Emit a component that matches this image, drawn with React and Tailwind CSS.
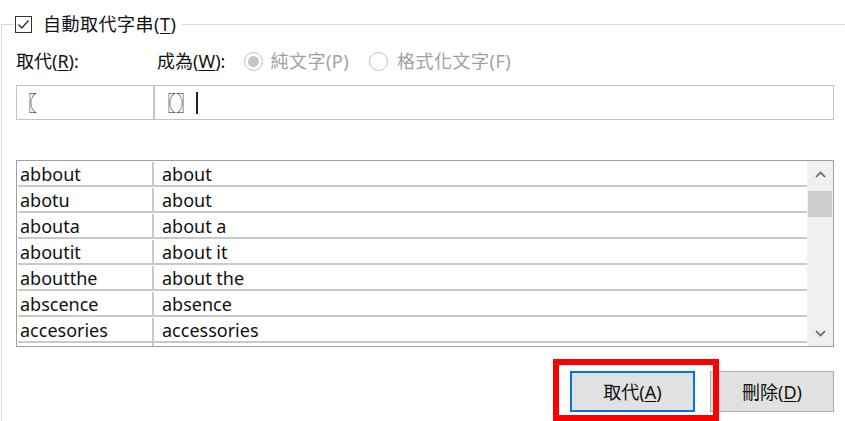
import React from 'react';

const rows = [
  ['abbout', 'about'],
  ['abotu', 'about'],
  ['abouta', 'about a'],
  ['aboutit', 'about it'],
  ['aboutthe', 'about the'],
  ['abscence', 'absence'],
  ['accesories', 'accessories'],
];

const Radio = ({ checked }) => (
  <span className="flex h-[19px] w-[19px] items-center justify-center rounded-full border border-[#c2c2c2] bg-white">
    {checked && <span className="h-[11px] w-[11px] rounded-full bg-[#c6c6c6]" />}
  </span>
);

const Chevron = ({ up }) => (
  <svg width="11" height="7" viewBox="0 0 11 7" className="text-[#606060]">
    <polyline
      points={up ? '1,6 5.5,1.5 10,6' : '1,1 5.5,5.5 10,1'}
      fill="none"
      stroke="currentColor"
      strokeWidth="1.6"
    />
  </svg>
);

export default function App() {
  return (
    <div className="h-[421px] w-[845px] overflow-hidden bg-white font-['Noto_Sans','Noto_Sans_CJK_TC',sans-serif] text-[18px] leading-[24px] text-[#111]">
      <fieldset className="ml-[1px] mt-[12px] h-[420px] border-l border-t border-[#d9d9d9]">
        <legend className="ml-[12px] flex items-center pl-[1px] pr-[6px]">
          {/* checkbox */}
          <span className="flex h-[17px] w-[17px] items-center justify-center border border-[#333] bg-white">
            <svg width="13" height="11" viewBox="0 0 13 11">
              <polyline points="1.5,5.5 4.8,9 11.5,1.5" fill="none" stroke="#333" strokeWidth="1.5" />
            </svg>
          </span>
          <span className="ml-[11px] tracking-[0.5px]">
            自動取代字串(<span className="underline underline-offset-2">T</span>)
          </span>
        </legend>

        <div className="pl-[14px] pr-[11px]">
          {/* labels */}
          <div className="mt-[13px] flex items-center">
            <span className="w-[141px]">
              取代(<span className="underline underline-offset-2">R</span>):
            </span>
            <span>
              成為(<span className="underline underline-offset-2">W</span>):
            </span>
            <span className="ml-[19px] flex items-center gap-[7px] tracking-[0.5px] text-[#a0a0a0]">
              <Radio checked />
              純文字(P)
            </span>
            <span className="ml-[20px] flex items-center gap-[9px] tracking-[0.5px] text-[#a0a0a0]">
              <Radio />
              格式化文字(F)
            </span>
          </div>

          {/* inputs */}
          <div className="mt-[12px] flex h-[35px] border border-[#c4c4c4]">
            <div className="flex w-[138px] items-center border-r-2 border-[#c4c4c4] pl-0 font-['Noto_Sans_CJK_TC',sans-serif] text-[20px] font-bold text-[#222]">〖</div>
            <div className="flex flex-1 items-center pl-[1px] font-['Noto_Sans_CJK_TC',sans-serif] text-[20px] font-bold text-[#222]">
              〖〗
              <span className="h-[22px] w-[1.5px] bg-[#222]" />
            </div>
          </div>

          {/* list */}
          <div className="mt-[40px] flex h-[187px] border border-[#a0a0a0]">
            <div className="flex-1 overflow-hidden pl-[1px]">
              {rows.map(([a, b]) => (
                <div key={a} className="flex h-[26px] border-b-2 border-[#c9c9c9] pt-[1px] leading-[24px]">
                  <div className="w-[136px] border-r-2 border-[#c9c9c9] pl-[2px]">{a}</div>
                  <div className="pl-[8px]">{b}</div>
                </div>
              ))}
              <div className="h-[4px] w-[136px] border-r-2 border-[#c9c9c9]" />
            </div>
            <div className="flex w-[26px] flex-col bg-[#f0f0f0]">
              <div className="flex h-[26px] items-center justify-center">
                <Chevron up />
              </div>
              <div className="mx-[1px] mt-[4px] h-[26px] bg-[#cdcdcd]" />
              <div className="flex-1" />
              <div className="flex h-[26px] items-center justify-center">
                <Chevron />
              </div>
            </div>
          </div>

          {/* buttons */}
          <div className="mt-[24px] flex justify-end gap-[15px]">
            <div className="relative">
              <button className="h-[41px] w-[125px] border-2 border-[#0078d7] bg-[#e1e1e1]">
                取代(<span className="underline underline-offset-2">A</span>)
              </button>
              <div className="pointer-events-none absolute left-[-17px] top-[-12px] h-[62px] w-[166px] border-[6px] border-[#ff0000]" />
            </div>
            <button className="h-[41px] w-[124px] border border-[#adadad] bg-[#e1e1e1]">
              刪除(<span className="underline underline-offset-2">D</span>)
            </button>
          </div>
        </div>
      </fieldset>
    </div>
  );
}
